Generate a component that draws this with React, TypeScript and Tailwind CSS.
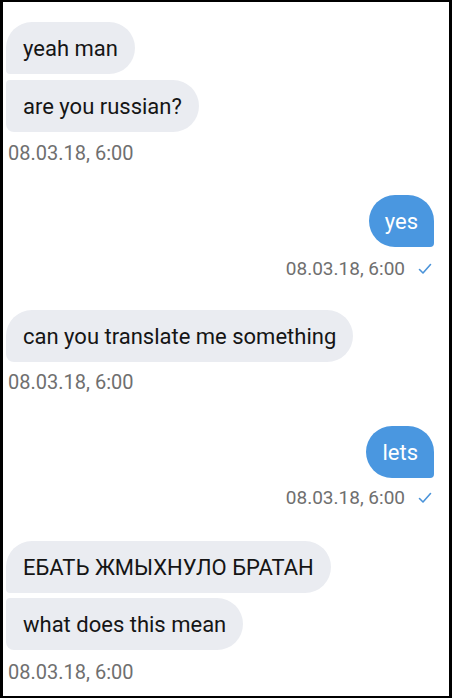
import React from 'react';

const font = { fontFamily: 'Roboto, "Noto Sans", sans-serif' };

const Check = () => (
  <svg width="14" height="12" viewBox="0 0 14 12" className="ml-[13px]">
    <path d="M1.5 6.5 L5 10 L12.5 1.5" fill="none" stroke="#4a93d9" strokeWidth="1.6" strokeLinecap="round" strokeLinejoin="round" />
  </svg>
);

const Stamp = ({ right, mt }: { right?: boolean; mt: string }) =>
  right ? (
    <div className={`flex items-center justify-end pr-[17px] h-[24px] text-[19px] text-[#6f6f6f] ${mt}`}>
      <span>08.03.18, 6:00</span>
      <Check />
    </div>
  ) : (
    <div className={`pl-[2px] h-[24px] leading-[24px] text-[20px] text-[#6f6f6f] ${mt}`}>08.03.18, 6:00</div>
  );

const In = ({ text, shape, mt }: { text: string; shape: string; mt: string }) => (
  <div className={`self-start h-[52px] flex items-center px-[17px] bg-[#eaecf1] text-[22px] text-[#151515] ${shape} ${mt}`}>
    {text}
  </div>
);

const Out = ({ text, mt }: { text: string; mt: string }) => (
  <div className={`self-end mr-[15px] h-[52px] flex items-center px-[16px] bg-[#4a97e0] text-[22px] text-white rounded-[26px] rounded-br-[4px] ${mt}`}>
    {text}
  </div>
);

export default function App() {
  return (
    <div className="w-[452px] h-[698px] bg-black" style={font}>
      <div className="w-full h-full border-t-[2px] border-b-[2px] border-l-[3px] border-r-[3px] border-black bg-white flex flex-col pl-[3px]">
        <In text="yeah man" shape="rounded-[26px] rounded-bl-[4px]" mt="mt-[20px]" />
        <In text="are you russian?" shape="rounded-[26px] rounded-tl-[4px] rounded-bl-[8px]" mt="mt-[6px]" />
        <Stamp mt="mt-[9px]" />
        <Out text="yes" mt="mt-[30px]" />
        <Stamp right mt="mt-[10px]" />
        <In text="can you translate me something" shape="rounded-[26px] rounded-bl-[8px]" mt="mt-[29px]" />
        <Stamp mt="mt-[8px]" />
        <Out text="lets" mt="mt-[32px]" />
        <Stamp right mt="mt-[8px]" />
        <In text="ЕБАТЬ ЖМЫХНУЛО БРАТАН" shape="rounded-[26px] rounded-bl-[4px]" mt="mt-[31px]" />
        <In text="what does this mean" shape="rounded-[26px] rounded-tl-[4px] rounded-bl-[8px]" mt="mt-[5px]" />
        <Stamp mt="mt-[10px]" />
      </div>
    </div>
  );
}
